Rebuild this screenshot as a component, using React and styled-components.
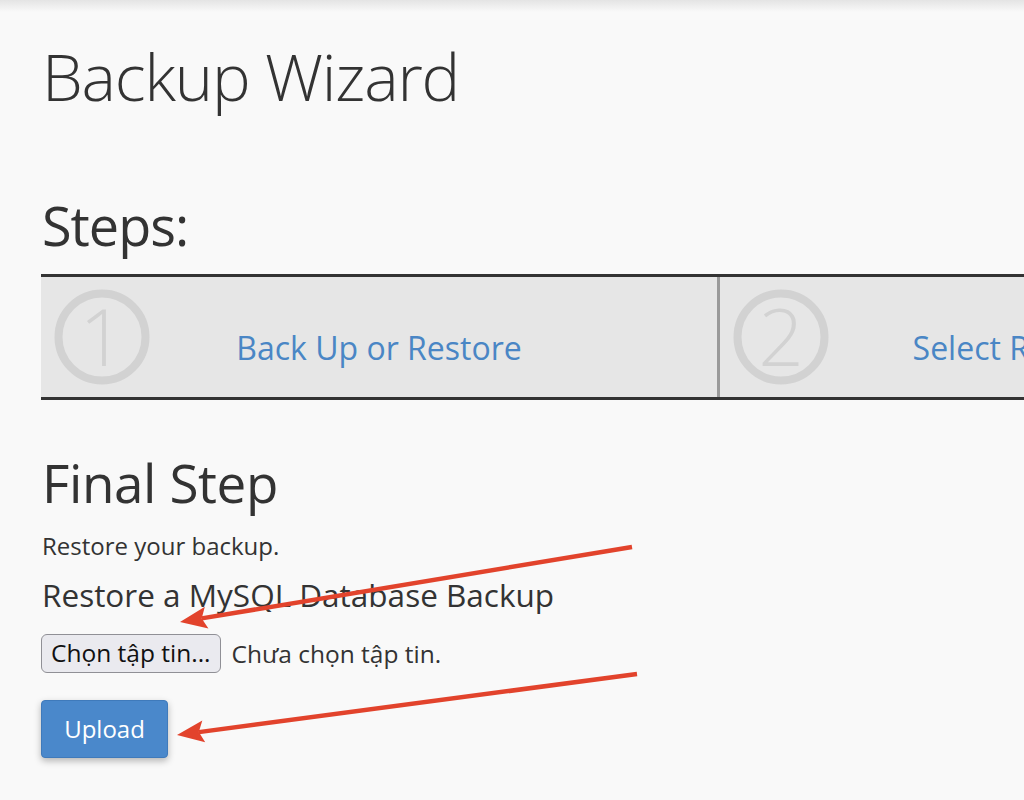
import React from "react";
import styled, { createGlobalStyle } from "styled-components";

const GlobalStyle = createGlobalStyle`
  html, body {
    margin: 0;
    padding: 0;
    background: #f9f9f9;
    overflow-x: hidden;
  }
  body {
    font-family: "Open Sans", "Liberation Sans", sans-serif;
    color: #333;
  }
`;

const Page = styled.div`
  position: relative;
  width: 1024px;
  min-height: 800px;
  overflow: hidden;
`;

const TopShade = styled.div`
  height: 12px;
  background: linear-gradient(#e4e4e4, #f9f9f9);
`;

const Content = styled.div`
  padding: 0 0 40px 41px;
`;

const Title = styled.h1`
  margin: 32px 0 0 1px;
  font-size: 65px;
  font-weight: 300;
  line-height: 1;
  letter-spacing: -1.2px;
  color: #333;
`;

const SectionTitle = styled.h2`
  margin: ${(p) => p.$top}px 0 0 1px;
  font-size: ${(p) => p.$size}px;
  letter-spacing: ${(p) => p.$track || 0}px;
  font-weight: 400;
  line-height: 1;
  color: #333;
`;

const Steps = styled.div`
  margin-top: 22px;
  width: 2034px;
  display: flex;
  border-top: 3px solid #333;
  border-bottom: 3px solid #333;
  background: #e6e6e6;
`;

const Step = styled.div`
  width: 676px;
  height: 120px;
  display: grid;
  grid-template-columns: 110px 1fr 110px;
  align-items: center;
  & + & {
    border-left: 3px solid #9a9a9a;
  }
`;

const StepBadge = styled.svg`
  margin-left: 13px;
  width: 96px;
  height: 96px;
  display: block;
`;

const StepLabel = styled.a`
  text-align: center;
  font-size: 32px;
  color: #4a86c5;
  text-decoration: none;
  white-space: nowrap;
  padding-top: 21px;
`;

const Text = styled.p`
  margin: 25px 0 0 1px;
  font-size: 24px;
  line-height: 1;
  color: #333;
`;

const FileRow = styled.div`
  margin-top: 23px;
  display: flex;
  align-items: center;
  gap: 11px;
`;

const FileButton = styled.button`
  height: 39px;
  box-sizing: border-box;
  padding: 0 9px;
  border: 1px solid #909096;
  border-radius: 6px;
  background: #eaeaef;
  font-family: "Open Sans", sans-serif;
  font-size: 24.5px;
  line-height: 1;
  color: #111;
`;

const FileStatus = styled.span`
  font-family: "Open Sans", sans-serif;
  font-size: 24.5px;
  color: #333;
`;

const UploadButton = styled.button`
  margin-top: 27px;
  width: 127px;
  height: 58px;
  border: 1px solid #3f7abb;
  border-radius: 4px;
  background: #4a88cb;
  color: #fff;
  font-family: "Open Sans", sans-serif;
  font-size: 24px;
  box-shadow: 0 3px 7px rgba(0, 0, 0, 0.28);
`;

const Overlay = styled.svg`
  position: absolute;
  left: 0;
  top: 0;
  width: 1024px;
  height: 800px;
  pointer-events: none;
`;

function Badge({ n }) {
  return (
    <StepBadge viewBox="0 0 96 96">
      <circle cx="48" cy="48" r="43.5" fill="none" stroke="#d2d2d2" strokeWidth="8" />
      <text
        x="48"
        y="77"
        textAnchor="middle"
        fontFamily="'Open Sans', sans-serif"
        fontWeight="300"
        fontSize="80"
        fill="#d2d2d2"
      >
        {n}
      </text>
    </StepBadge>
  );
}

function Arrow({ x1, y1, x2, y2 }) {
  const dx = x2 - x1;
  const dy = y2 - y1;
  const len = Math.hypot(dx, dy);
  const ux = dx / len;
  const uy = dy / len;
  const nx = -uy;
  const ny = ux;
  const head = 27;
  const half = 11;
  const bx = x2 - ux * head;
  const by = y2 - uy * head;
  const ix = x2 - ux * (head - 5);
  const iy = y2 - uy * (head - 5);
  const pts = [
    [x2, y2],
    [bx + nx * half, by + ny * half],
    [ix, iy],
    [bx - nx * half, by - ny * half],
  ]
    .map((p) => p.join(","))
    .join(" ");
  return (
    <g>
      <line x1={x1} y1={y1} x2={ix} y2={iy} stroke="#e2432c" strokeWidth="4.5" strokeLinecap="butt" />
      <polygon points={pts} fill="#e2432c" />
    </g>
  );
}

export default function App() {
  return (
    <Page>
      <GlobalStyle />
      <TopShade />
      <Content>
        <Title>Backup Wizard</Title>
        <SectionTitle $top={89} $size={54} $track={-1}>Steps:</SectionTitle>
        <Steps>
          <Step>
            <Badge n="1" />
            <StepLabel href="#">Back Up or Restore</StepLabel>
          </Step>
          <Step>
            <Badge n="2" />
            <StepLabel href="#">Select Restore Type</StepLabel>
          </Step>
          <Step>
            <Badge n="3" />
            <StepLabel href="#">Restore</StepLabel>
          </Step>
        </Steps>
        <SectionTitle $top={56} $size={53} $track={-0.4}>Final Step</SectionTitle>
        <Text>Restore your backup.</Text>
        <SectionTitle $top={21} $size={31.5}>Restore a MySQL Database Backup</SectionTitle>
        <FileRow>
          <FileButton>Chọn tập tin...</FileButton>
          <FileStatus>Chưa chọn tập tin.</FileStatus>
        </FileRow>
        <UploadButton>Upload</UploadButton>
      </Content>
      <Overlay viewBox="0 0 1024 800">
        <Arrow x1={632} y1={547} x2={180} y2={622} />
        <Arrow x1={637} y1={674} x2={177} y2={735} />
      </Overlay>
    </Page>
  );
}
